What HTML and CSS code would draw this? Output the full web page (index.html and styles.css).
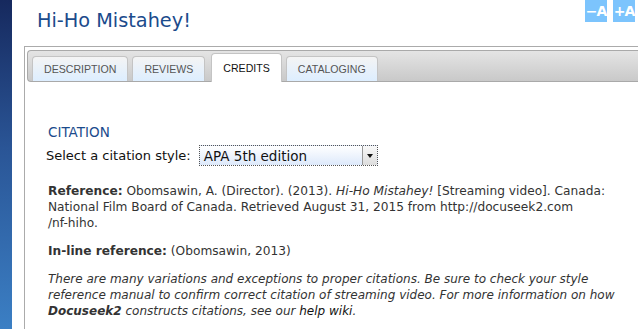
FILE: index.html
```html
<!DOCTYPE html>
<html>
<head>
<meta charset="utf-8">
<link rel="stylesheet" href="styles.css">
</head>
<body>
<div class="page">
  <div class="sidebar"></div>
  <div class="main">
    <div class="header">
      <h1 class="title">Hi-Ho Mistahey!</h1>
      <div class="sizers">
        <span class="sizer">&minus;A</span>
        <span class="sizer">+A</span>
      </div>
    </div>
    <div class="panel">
      <div class="tabbar">
        <div class="tab">DESCRIPTION</div>
        <div class="tab">REVIEWS</div>
        <div class="tab active">CREDITS</div>
        <div class="tab">CATALOGING</div>
      </div>
      <div class="content">
        <h2 class="heading">CITATION</h2>
        <div class="style-row">
          <span class="label">Select a citation style:</span>
          <div class="select"><span class="select-text">APA 5th edition</span><span class="arrow"></span></div>
        </div>
        <p class="para first"><b>Reference:</b> Obomsawin, A. (Director). (2013). <i>Hi-Ho Mistahey!</i> [Streaming video]. Canada:<br>National Film Board of Canada. Retrieved August 31, 2015 from http://docuseek2.com<br>/nf-hiho.</p>
        <p class="para"><b>In-line reference:</b> (Obomsawin, 2013)</p>
        <p class="para note">There are many variations and exceptions to proper citations. Be sure to check your style<br>reference manual to confirm correct citation of streaming video. For more information on how<br><b>Docuseek2</b> constructs citations, see our <span class="link">help wiki</span>.</p>
      </div>
    </div>
  </div>
</div>
</body>
</html>
```
FILE: styles.css
```css
html, body {
  margin: 0;
  padding: 0;
  background: #fff;
  overflow: hidden;
}
.page {
  display: flex;
  height: 329px;
}
.sidebar {
  width: 12px;
  flex: none;
  background: linear-gradient(#16295e, #2a5596 45%, #3b7fc4);
}
.main {
  flex: 1;
  margin-left: 12px;
  display: flex;
  flex-direction: column;
}
.header {
  height: 46px;
  display: flex;
  justify-content: space-between;
  align-items: flex-start;
}
.title {
  margin: 9px 0 0 13px;
  font-family: "DejaVu Sans", Verdana, sans-serif;
  font-weight: normal;
  font-size: 19.3px;
  color: #1b4b8c;
}
.sizers {
  display: flex;
  gap: 6px;
  margin-right: 3px;
}
.sizer {
  width: 22px;
  height: 22px;
  background: #7cc4fd;
  color: #fff;
  font-family: "DejaVu Sans", sans-serif;
  font-weight: bold;
  font-size: 14px;
  display: flex;
  align-items: center;
  justify-content: center;
  letter-spacing: -1px;
}
.panel {
  flex: 1;
  border-top: 1px solid #ababab;
  border-left: 1px solid #ababab;
  padding: 3px 0 0 2px;
}
.tabbar {
  height: 30px;
  border: 1px solid #a9a9a9;
  border-right: none;
  border-radius: 4px 0 0 4px;
  background: linear-gradient(#e4e4e4, #c9c9c9);
  display: flex;
  align-items: flex-end;
  padding-left: 4px;
  gap: 4px;
}
.tab {
  height: 24px;
  padding: 0 11px;
  border: 1px solid #c4c4c4;
  border-bottom: none;
  border-radius: 4px 4px 0 0;
  background: linear-gradient(#f4f4f4, #ddeeff);
  font-family: "Liberation Sans", Arial, sans-serif;
  font-size: 10.6px;
  color: #555;
  display: flex;
  align-items: center;
}
.tab.active {
  height: 28px;
  background: #fff;
  color: #111;
  margin-left: 2px;
  margin-bottom: -1px;
}
.content {
  padding: 42px 0 0 21px;
  font-family: "DejaVu Sans", Verdana, sans-serif;
}
.heading {
  margin: 0;
  font-weight: normal;
  font-size: 13.5px;
  color: #1b4b8c;
}
.style-row {
  display: flex;
  align-items: center;
  margin: 5px 0 0 -2px;
  gap: 8px;
}
.label {
  font-size: 13px;
  color: #111;
}
.select {
  width: 179px;
  height: 21px;
  border: 1px dotted #555;
  background: linear-gradient(#fff, #dde9fb);
  display: flex;
  align-items: center;
  justify-content: space-between;
  box-sizing: border-box;
}
.select-text {
  font-size: 13.5px;
  color: #111;
  padding-left: 4px;
}
.arrow {
  width: 14px;
  height: 19px;
  border-left: 1px solid #999;
  background: linear-gradient(#f8f8f8, #ddd);
  position: relative;
}
.arrow::after {
  content: "";
  position: absolute;
  left: 4px;
  top: 8px;
  border-left: 3px solid transparent;
  border-right: 3px solid transparent;
  border-top: 4px solid #111;
}
.para {
  margin: 12px 0 0 0;
  font-size: 12.2px;
  line-height: 16px;
  color: #333;
}
.para.first {
  margin-top: 17px;
}
.note {
  font-style: italic;
  font-size: 12px;
}
.link {
  color: #111;
}
```
